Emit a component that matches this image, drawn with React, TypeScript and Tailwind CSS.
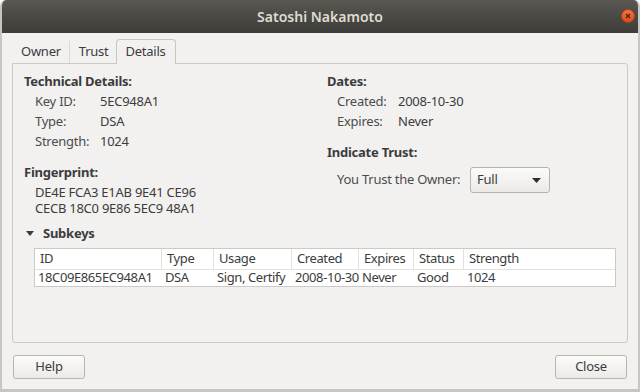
const font = { fontFamily: '"Noto Sans", "Open Sans", sans-serif' };

function Row({ label, value, w }: { label: string; value: string; w: string }) {
  return (
    <div className="flex h-[20px] items-center">
      <span className={`${w} text-[#4c4c4c]`}>{label}</span>
      <span>{value}</span>
    </div>
  );
}

const cols = [
  { h: "ID", v: "18C09E865EC948A1", w: "w-[127px]" },
  { h: "Type", v: "DSA", w: "w-[52px]" },
  { h: "Usage", v: "Sign, Certify", w: "w-[78px]" },
  { h: "Created", v: "2008-10-30", w: "w-[67px]" },
  { h: "Expires", v: "Never", w: "w-[55px]" },
  { h: "Status", v: "Good", w: "w-[50px]" },
  { h: "Strength", v: "1024", w: "flex-1" },
];

export default function App() {
  return (
    <div
      className="w-[640px] h-[392px] flex flex-col bg-[#f2f1f0] text-[13px] tracking-[-0.25px] text-[#3c3c3c] border-x-2 border-b-[3px] border-[#c8c6c2] rounded-t-[6px] overflow-hidden"
      style={font}
    >
      {/* Title bar */}
      <div className="relative h-[33px] shrink-0 flex items-center justify-center bg-gradient-to-b from-[#595751] to-[#3d3c38] -mx-[2px]">
        <span className="text-[14px] font-semibold text-[#dfdbd2] tracking-normal">Satoshi Nakamoto</span>
        <div className="absolute right-[5px] top-[9px] w-[14px] h-[14px] rounded-full bg-gradient-to-b from-[#f3733f] to-[#d94d17] border border-[#b6401a] flex items-center justify-center">
          <svg width="6" height="6" viewBox="0 0 6 6">
            <path d="M1 1L5 5M5 1L1 5" stroke="#4a2410" strokeWidth="1.3" />
          </svg>
        </div>
      </div>

      {/* Tabs */}
      <div className="flex items-end h-[30px] pl-[10px] shrink-0">
        <div className="h-[22px] pl-[9px] pr-[8px] flex items-center border-r border-[#dcd9d5]">Owner</div>
        <div className="h-[22px] pl-[9px] pr-[7px] flex items-center">Trust</div>
        <div className="h-[25px] px-[9px] flex items-center bg-[#f2f1f0] border border-b-0 border-[#c9c5c0] rounded-t-[4px] relative top-[1px]">
          Details
        </div>
      </div>

      {/* Panel */}
      <div className="mx-[10px] h-[280px] border border-[#cdc9c4] rounded-b-[3px] rounded-tr-[3px] px-[11px] pt-[8px]">
        <div className="flex">
          <div className="w-[303px]">
            <div className="h-[20px] flex items-center font-bold">Technical Details:</div>
            <div className="pl-[11px]">
              <Row label="Key ID:" value="5EC948A1" w="w-[65px]" />
              <Row label="Type:" value="DSA" w="w-[65px]" />
              <Row label="Strength:" value="1024" w="w-[65px]" />
            </div>
            <div className="mt-[11px] h-[20px] flex items-center font-bold">Fingerprint:</div>
            <div className="pl-[11px] mt-[1px] leading-[16px]">
              <div>DE4E FCA3 E1AB 9E41 CE96</div>
              <div>CECB 18C0 9E86 5EC9 48A1</div>
            </div>
          </div>
          <div className="flex-1">
            <div className="h-[20px] flex items-center font-bold">Dates:</div>
            <div className="pl-[10px]">
              <Row label="Created:" value="2008-10-30" w="w-[61px]" />
              <Row label="Expires:" value="Never" w="w-[61px]" />
            </div>
            <div className="mt-[11px] h-[20px] flex items-center font-bold">Indicate Trust:</div>
            <div className="pl-[10px] mt-[4px] flex items-center">
              <span className="w-[133px] text-[#4c4c4c]">You Trust the Owner:</span>
              <div className="w-[80px] h-[26px] rounded-[3px] border border-[#b7b3ad] bg-gradient-to-b from-[#fbfbfa] to-[#eceae7] flex items-center justify-between pl-[6px] pr-[8px]">
                <span>Full</span>
                <svg width="9" height="5" viewBox="0 0 9 5">
                  <path d="M0 0H9L4.5 5Z" fill="#2e2e2e" />
                </svg>
              </div>
            </div>
          </div>
        </div>

        {/* Subkeys */}
        <div className="mt-[8px] h-[20px] flex items-center font-bold pl-[2px]">
          <svg width="8" height="6" viewBox="0 0 8 6" className="mr-[9px]">
            <path d="M0 0H8L4 5Z" fill="#3c3c3c" />
          </svg>
          Subkeys
        </div>
        <div className="ml-[10px] mt-[4px] border border-[#cdc9c4] bg-white tracking-[-0.4px]">
          <div className="flex h-[21px] border-b border-[#e3e1de]">
            {cols.map((c, i) => (
              <div
                key={c.h}
                className={`${c.w} flex items-center pl-[5px] ${i < cols.length - 1 ? "border-r border-[#e3e1de]" : ""}`}
              >
                {c.h}
              </div>
            ))}
          </div>
          <div className="flex h-[16px]">
            {cols.map((c) => (
              <div key={c.h} className={`${c.w} flex items-center pl-[3px] whitespace-nowrap`}>
                {c.v}
              </div>
            ))}
          </div>
        </div>
      </div>

      {/* Buttons */}
      <div className="flex justify-between px-[11px] mt-[12px]">
        {["Help", "Close"].map((b) => (
          <div
            key={b}
            className="w-[72px] h-[24px] rounded-[3px] border border-[#b7b3ad] bg-gradient-to-b from-[#fbfbfa] to-[#eceae7] flex items-center justify-center"
          >
            {b}
          </div>
        ))}
      </div>
    </div>
  );
}
